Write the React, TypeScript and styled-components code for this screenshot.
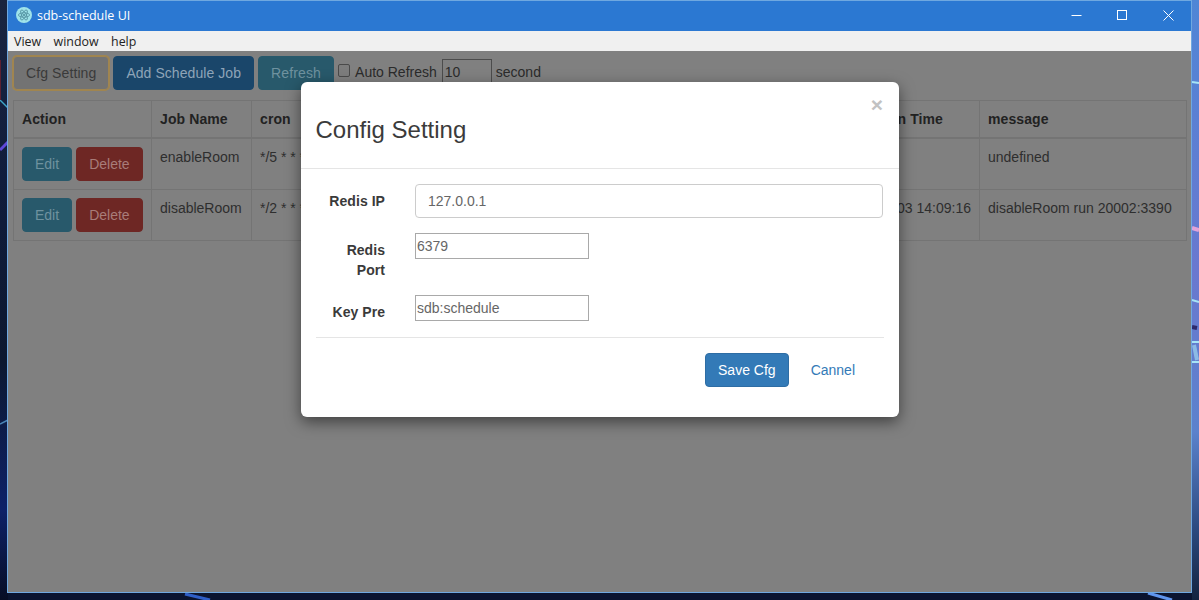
import React from 'react';
import styled, { createGlobalStyle } from 'styled-components';

const GlobalStyle = createGlobalStyle`
  html, body {
    margin: 0;
    padding: 0;
    height: 600px;
    overflow: hidden;
    background: #0b1638;
  }
  * {
    box-sizing: border-box;
  }
`;

const Desktop = styled.div`
  position: relative;
  width: 1199px;
  height: 600px;
  padding-left: 7px;
  overflow: hidden;
`;

const Wallpaper = styled.svg`
  position: absolute;
  left: 0;
  top: 0;
`;

const Window = styled.div`
  position: relative;
  width: 1185px;
  height: 593px;
  display: flex;
  flex-direction: column;
  border: 1px solid #6fa8e0;
  background: #808080;
  font-family: 'Liberation Sans', Arial, sans-serif;
  font-size: 14px;
  color: #2a2a2a;
`;

const TitleBar = styled.div`
  height: 30px;
  padding: 0 0 2px 8px;
  background: #2b78d2;
  display: flex;
  align-items: center;
  color: #fff;
  font-family: 'Open Sans', sans-serif;
  font-size: 12.5px;
`;

const TitleText = styled.span`
  margin-left: 5px;
  flex: 1;
`;

const WinButton = styled.div`
  width: 46px;
  height: 28px;
  display: flex;
  align-items: center;
  justify-content: center;
`;

const MenuBar = styled.div`
  height: 20px;
  background: #f0f0f0;
  display: flex;
  align-items: center;
  gap: 12.5px;
  padding-left: 6px;
  color: #222;
  font-family: 'Open Sans', sans-serif;
  font-size: 12.4px;
`;

const Content = styled.div`
  flex: 1;
  padding: 5px 4px 0 5px;
`;

const Toolbar = styled.div`
  height: 44px;
  display: flex;
  align-items: flex-start;
  color: #2b2b2b;
`;

const Btn = styled.div<{ $bg: string; $fg: string; $border?: string; $ml?: number; $spread?: number }>`
  height: 34px;
  padding: 0 12px;
  display: inline-flex;
  align-items: center;
  justify-content: center;
  margin-left: ${({ $ml }) => $ml ?? 0}px;
  border-radius: 4px;
  border: 1px solid ${({ $border, $bg }) => $border ?? $bg};
  background: ${({ $bg }) => $bg};
  color: ${({ $fg }) => $fg};
  letter-spacing: ${({ $spread }) => $spread ?? 0}px;
  white-space: nowrap;
`;

const FocusBtn = styled(Btn)`
  box-shadow: 0 0 0 1px #a08550;
`;

const Check = styled.span`
  width: 12px;
  height: 13px;
  margin: 8px 5px 0 4px;
  border: 1px solid #4a4a4a;
  border-radius: 2px;
  background: #7d7d7d;
`;

const ToolLabel = styled.span`
  margin-top: 8px;
  line-height: 16px;
`;

const SecondsBox = styled.div`
  width: 50px;
  height: 26px;
  margin: 3px 4px 0 5px;
  padding-left: 2px;
  line-height: 24px;
  border: 1px solid #4c4c4c;
  color: #2b2b2b;
`;

const Table = styled.table`
  width: 1173px;
  table-layout: fixed;
  border-collapse: collapse;
  line-height: 20px;
`;

const Th = styled.th`
  height: 37px;
  padding: 8px;
  text-align: left;
  vertical-align: middle;
  font-weight: bold;
  letter-spacing: 0.1px;
  color: #222;
  border: 1px solid #747474;
  border-bottom-width: 2px;
`;

const TimeHead = styled(Th)`
  text-align: right;
  padding-right: 36px;
`;

const Td = styled.td`
  height: 51px;
  padding: 8px;
  vertical-align: top;
  color: #2e2e2e;
  white-space: nowrap;
  overflow: hidden;
  border: 1px solid #747474;
`;

const TimeCell = styled(Td)`
  text-align: right;
`;

const RowButtons = styled.div`
  display: flex;
  gap: 4px;
`;

const Modal = styled.div`
  position: absolute;
  left: 293px;
  top: 81px;
  width: 598px;
  height: 335px;
  background: #fff;
  border-radius: 6px;
  box-shadow: 0 5px 15px rgba(0, 0, 0, 0.5);
  color: #333;
`;

const ModalHeader = styled.div`
  position: relative;
  height: 87px;
  padding: 30px 14.5px 0;
  border-bottom: 1px solid #e5e5e5;
`;

const ModalTitle = styled.div`
  font-size: 24px;
  line-height: 36px;
  color: #3b3b3b;
`;

const CloseMark = styled.span`
  position: absolute;
  right: 16px;
  top: 15px;
  font-size: 21px;
  line-height: 16px;
  font-weight: bold;
  color: #c2c2c2;
`;

const ModalBody = styled.div`
  padding: 15px 15px 0;
`;

const FieldRow = styled.div<{ $h: number }>`
  display: flex;
  height: ${({ $h }) => $h}px;
`;

const FieldLabel = styled.label`
  width: 69px;
  margin-right: 30px;
  padding-top: 7px;
  text-align: right;
  font-weight: bold;
  line-height: 20px;
  letter-spacing: 0.05px;
  color: #3a3a3a;
`;

const WideInput = styled.div`
  width: 468px;
  height: 34px;
  padding: 0 12px;
  line-height: 32px;
  border: 1px solid #ccc;
  border-radius: 4px;
  color: #666;
`;

const PlainInput = styled.div`
  width: 174px;
  height: 26px;
  padding-left: 1px;
  line-height: 24px;
  border: 1px solid #a9a9a9;
  color: #666;
`;

const ModalFooter = styled.div`
  margin: 0 15px;
  border-top: 1px solid #e5e5e5;
  display: flex;
  justify-content: flex-end;
  align-items: flex-start;
  padding-top: 15px;
`;

const LinkBtn = styled.div`
  height: 34px;
  line-height: 34px;
  padding: 0 12px;
  margin: 0 17px 0 10px;
  color: #337ab7;
`;

const columns = [138, 100, 220, 180, 181, 147, 207];

const rows = [
  { job: 'enableRoom', cron: '*/5 * * * * *', next: '', last: '', message: 'undefined' },
  {
    job: 'disableRoom',
    cron: '*/2 * * * * *',
    next: '',
    last: '2018-01-03 14:09:16',
    message: 'disableRoom run 20002:3390',
  },
];

const LogoIcon = () => (
  <svg width="16" height="16" viewBox="0 0 16 16">
    <circle cx="8" cy="8" r="8" fill="#9fe3ea" />
    <g fill="none" stroke="#4f8d9c" strokeWidth="0.8">
      <ellipse cx="8" cy="8" rx="5.6" ry="2.2" />
      <ellipse cx="8" cy="8" rx="5.6" ry="2.2" transform="rotate(60 8 8)" />
      <ellipse cx="8" cy="8" rx="5.6" ry="2.2" transform="rotate(120 8 8)" />
    </g>
    <circle cx="8" cy="8" r="1.1" fill="#4f8d9c" />
  </svg>
);

const Backdrop = () => (
  <Wallpaper width="1199" height="600" viewBox="0 0 1199 600">
    <defs>
      <linearGradient id="right" x1="0" y1="0" x2="0" y2="1">
        <stop offset="0" stopColor="#4f86d6" />
        <stop offset="0.45" stopColor="#6a78cf" />
        <stop offset="0.72" stopColor="#5c82cc" />
        <stop offset="0.88" stopColor="#2c4a80" />
        <stop offset="1" stopColor="#13233f" />
      </linearGradient>
      <linearGradient id="left" x1="0" y1="0" x2="0" y2="1">
        <stop offset="0" stopColor="#1a2540" />
        <stop offset="0.3" stopColor="#101c3c" />
        <stop offset="0.6" stopColor="#0c1830" />
        <stop offset="0.85" stopColor="#0d2168" />
        <stop offset="1" stopColor="#070d24" />
      </linearGradient>
    </defs>
    <rect width="1199" height="600" fill="#0a1430" />
    <rect width="8" height="600" fill="url(#left)" />
    <rect x="1192" width="7" height="600" fill="url(#right)" />
    <g stroke="#a8e4f5" strokeWidth="2">
      <path d="M1192 82 L1199 83" />
      <path d="M1192 300 L1199 302" />
      <path d="M1192 342 L1199 342" />
      <path d="M1192 362 L1199 362" />
      <path d="M1194 345 L1197 360" strokeWidth="4" opacity="0.6" />
    </g>
    <path d="M1192 228 L1199 230" stroke="#e2a3d8" strokeWidth="4" />
    <path d="M1192 327 L1197 328" stroke="#2c2a6c" strokeWidth="4" />
    <path d="M0 100 L8 108" stroke="#3fa6c8" strokeWidth="1.5" />
    <path d="M0 150 L8 142" stroke="#5e47d8" strokeWidth="3" />
    <path d="M0 424 L8 420" stroke="#4a86b8" strokeWidth="1.5" />
    <path d="M0 60 V100" stroke="#5c2030" strokeWidth="2" />
    <path d="M185 594 L210 600" stroke="#2f5fc8" strokeWidth="3" />
    <path d="M1148 593 L1172 600" stroke="#5f95ee" strokeWidth="3" />
  </Wallpaper>
);

export default function App() {
  return (
    <>
      <GlobalStyle />
      <Desktop>
        <Backdrop />
        <Window>
          <TitleBar>
            <LogoIcon />
            <TitleText>sdb-schedule UI</TitleText>
            <WinButton>
              <svg width="11" height="11" viewBox="0 0 11 11">
                <path d="M0.5 5.5 H10.5" stroke="#fff" />
              </svg>
            </WinButton>
            <WinButton>
              <svg width="11" height="11" viewBox="0 0 11 11">
                <rect x="0.5" y="0.5" width="9" height="9" fill="none" stroke="#fff" />
              </svg>
            </WinButton>
            <WinButton>
              <svg width="11" height="11" viewBox="0 0 11 11">
                <path d="M0.5 0.5 L10.5 10.5 M10.5 0.5 L0.5 10.5" stroke="#fff" />
              </svg>
            </WinButton>
          </TitleBar>
          <MenuBar>
            <span>View</span>
            <span>window</span>
            <span>help</span>
          </MenuBar>
          <Content>
            <Toolbar>
              <FocusBtn $bg="#737373" $fg="#3a3a3a" $border="#a08550" $spread={0.1}>
                Cfg Setting
              </FocusBtn>
              <Btn $bg="#1a466a" $fg="#8ea4b8" $ml={4} $spread={0.06}>
                Add Schedule Job
              </Btn>
              <Btn $bg="#28596b" $fg="#6f929f" $ml={4} $spread={0.15}>
                Refresh
              </Btn>
              <Check />
              <ToolLabel>Auto Refresh</ToolLabel>
              <SecondsBox>10</SecondsBox>
              <ToolLabel>second</ToolLabel>
            </Toolbar>
            <Table>
              <colgroup>
                {columns.map((w, i) => (
                  <col key={i} width={w} />
                ))}
              </colgroup>
              <thead>
                <tr>
                  <Th>Action</Th>
                  <Th>Job Name</Th>
                  <Th>cron</Th>
                  <Th>Next Run Time</Th>
                  <Th>Status</Th>
                  <TimeHead>Last Run Time</TimeHead>
                  <Th>message</Th>
                </tr>
              </thead>
              <tbody>
                {rows.map((r) => (
                  <tr key={r.job}>
                    <Td>
                      <RowButtons>
                        <Btn $bg="#28596b" $fg="#6f929f">Edit</Btn>
                        <Btn $bg="#6e2724" $fg="#a87c79">Delete</Btn>
                      </RowButtons>
                    </Td>
                    <Td>{r.job}</Td>
                    <Td>{r.cron}</Td>
                    <Td>{r.next}</Td>
                    <Td />
                    <TimeCell>{r.last}</TimeCell>
                    <Td>{r.message}</Td>
                  </tr>
                ))}
              </tbody>
            </Table>
          </Content>
          <Modal>
            <ModalHeader>
              <ModalTitle>Config Setting</ModalTitle>
              <CloseMark>×</CloseMark>
            </ModalHeader>
            <ModalBody>
              <FieldRow $h={49}>
                <FieldLabel>Redis IP</FieldLabel>
                <WideInput>127.0.0.1</WideInput>
              </FieldRow>
              <FieldRow $h={62}>
                <FieldLabel>Redis Port</FieldLabel>
                <PlainInput>6379</PlainInput>
              </FieldRow>
              <FieldRow $h={42}>
                <FieldLabel>Key Pre</FieldLabel>
                <PlainInput>sdb:schedule</PlainInput>
              </FieldRow>
            </ModalBody>
            <ModalFooter>
              <Btn $bg="#337ab7" $fg="#fff" $border="#2e6da4">Save Cfg</Btn>
              <LinkBtn>Cannel</LinkBtn>
            </ModalFooter>
          </Modal>
        </Window>
      </Desktop>
    </>
  );
}
